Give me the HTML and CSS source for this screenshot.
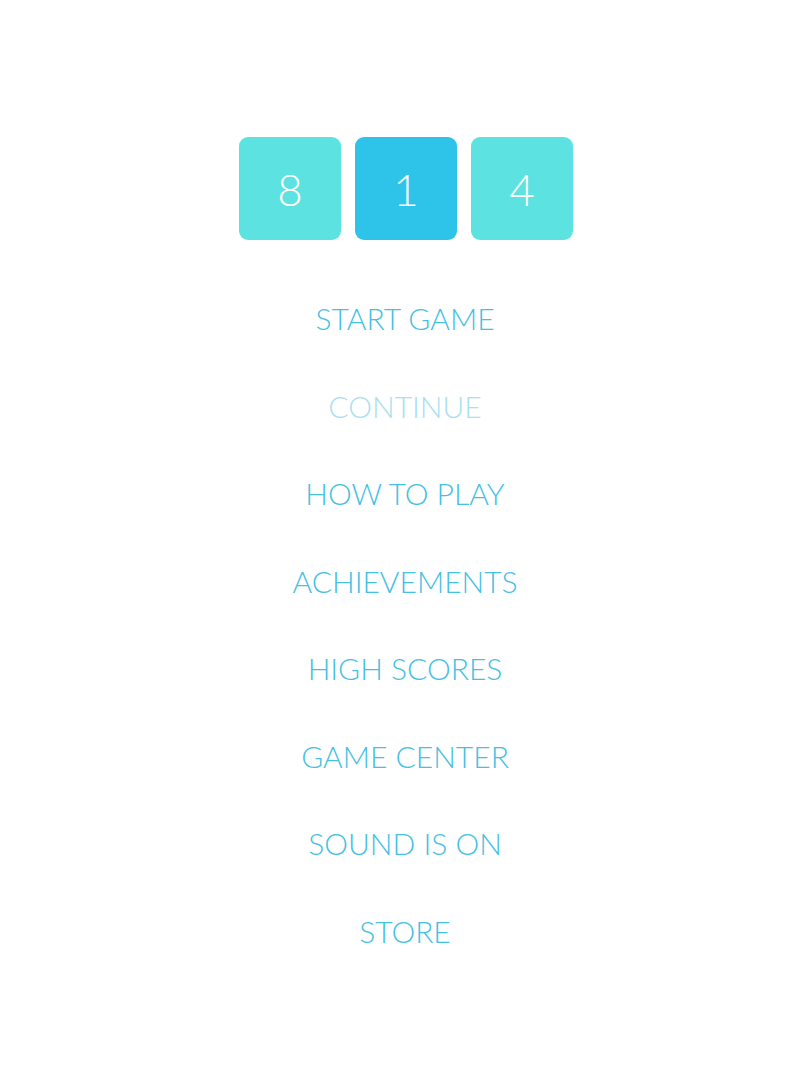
FILE: index.html
```html
<!DOCTYPE html>
<html>
  <head>
    <meta charset="utf-8" />
    <title>814</title>
    <link rel="stylesheet" href="styles.css">
  </head>
  <body>
    <div id="main">
      <div id="logo">
        <div class="tile">8</div>
        <div class="tile dark">1</div>
        <div class="tile">4</div>
      </div>
      <ul id="menu">
        <li>START GAME</li>
        <li class="disabled">CONTINUE</li>
        <li>HOW TO PLAY</li>
        <li>ACHIEVEMENTS</li>
        <li>HIGH SCORES</li>
        <li>GAME CENTER</li>
        <li>SOUND IS ON</li>
        <li>STORE</li>
      </ul>
    </div>
  </body>
</html>
```
FILE: styles.css
```css
* {
  box-sizing: border-box;
  font-family: Lato, "Open Sans", sans-serif;
}
body {
  margin: 0;
  background-color: #fff;
}
#main {
  display: flex;
  flex-direction: column;
  align-items: center;
  padding-top: 137px;
}
#logo {
  display: flex;
  gap: 14px;
  margin-left: 2px;
}
.tile {
  width: 102px;
  height: 103px;
  border-radius: 9px;
  background-color: #5ce3e1;
  color: #fff;
  font-size: 44px;
  font-weight: 300;
  display: grid;
  place-items: center;
}
.tile.dark {
  background-color: #2ec4ea;
}
#menu {
  list-style: none;
  margin: 35px 0 0;
  padding: 0;
  text-align: center;
}
#menu li {
  height: 87.5px;
  line-height: 87.5px;
  font-size: 30px;
  font-weight: 300;
  color: #45c0e2;
  cursor: pointer;
}
#menu li.disabled {
  color: #a8e1f0;
  cursor: default;
}
```
